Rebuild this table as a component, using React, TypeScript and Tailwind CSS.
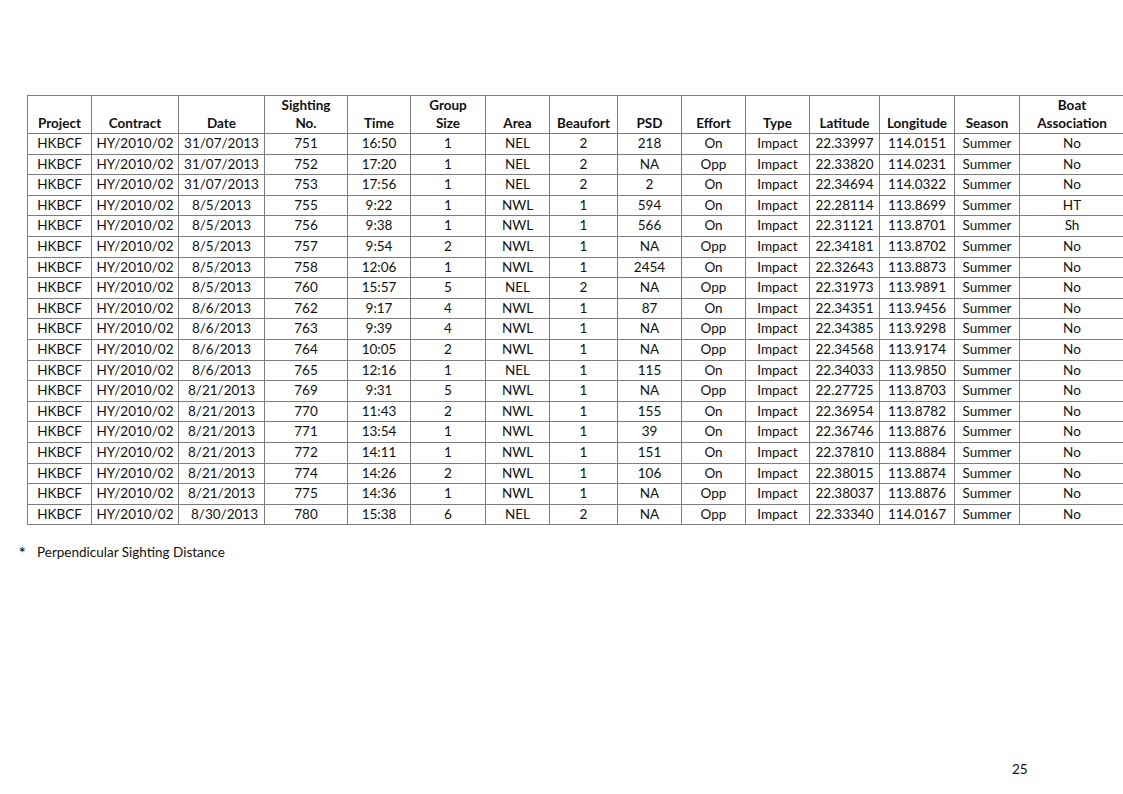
import React from "react";

const widths = [64, 87, 86, 83, 63, 75, 64, 68, 64, 64, 64, 70, 75, 65, 105];
const total = widths.reduce((a, b) => a + b, 0);

const rows: string[][] = [
  ["31/07/2013", "751", "16:50", "1", "NEL", "2", "218", "On", "22.33997", "114.0151", "No"],
  ["31/07/2013", "752", "17:20", "1", "NEL", "2", "NA", "Opp", "22.33820", "114.0231", "No"],
  ["31/07/2013", "753", "17:56", "1", "NEL", "2", "2", "On", "22.34694", "114.0322", "No"],
  ["8/5/2013", "755", "9:22", "1", "NWL", "1", "594", "On", "22.28114", "113.8699", "HT"],
  ["8/5/2013", "756", "9:38", "1", "NWL", "1", "566", "On", "22.31121", "113.8701", "Sh"],
  ["8/5/2013", "757", "9:54", "2", "NWL", "1", "NA", "Opp", "22.34181", "113.8702", "No"],
  ["8/5/2013", "758", "12:06", "1", "NWL", "1", "2454", "On", "22.32643", "113.8873", "No"],
  ["8/5/2013", "760", "15:57", "5", "NEL", "2", "NA", "Opp", "22.31973", "113.9891", "No"],
  ["8/6/2013", "762", "9:17", "4", "NWL", "1", "87", "On", "22.34351", "113.9456", "No"],
  ["8/6/2013", "763", "9:39", "4", "NWL", "1", "NA", "Opp", "22.34385", "113.9298", "No"],
  ["8/6/2013", "764", "10:05", "2", "NWL", "1", "NA", "Opp", "22.34568", "113.9174", "No"],
  ["8/6/2013", "765", "12:16", "1", "NEL", "1", "115", "On", "22.34033", "113.9850", "No"],
  ["8/21/2013", "769", "9:31", "5", "NWL", "1", "NA", "Opp", "22.27725", "113.8703", "No"],
  ["8/21/2013", "770", "11:43", "2", "NWL", "1", "155", "On", "22.36954", "113.8782", "No"],
  ["8/21/2013", "771", "13:54", "1", "NWL", "1", "39", "On", "22.36746", "113.8876", "No"],
  ["8/21/2013", "772", "14:11", "1", "NWL", "1", "151", "On", "22.37810", "113.8884", "No"],
  ["8/21/2013", "774", "14:26", "2", "NWL", "1", "106", "On", "22.38015", "113.8874", "No"],
  ["8/21/2013", "775", "14:36", "1", "NWL", "1", "NA", "Opp", "22.38037", "113.8876", "No"],
  ["8/30/2013", "780", "15:38", "6", "NEL", "2", "NA", "Opp", "22.33340", "114.0167", "No"],
];

const headers: [string, string][] = [
  ["", "Project"],
  ["", "Contract"],
  ["", "Date"],
  ["Sighting", "No."],
  ["", "Time"],
  ["Group", "Size"],
  ["", "Area"],
  ["", "Beaufort"],
  ["", "PSD"],
  ["", "Effort"],
  ["", "Type"],
  ["", "Latitude"],
  ["", "Longitude"],
  ["", "Season"],
  ["Boat", "Association"],
];

export default function App() {
  return (
    <div
      className="relative w-[1123px] h-[794px] overflow-hidden bg-white text-[#111]"
      style={{ fontFamily: "Lato, 'Open Sans', sans-serif" }}
    >
      <div className="pt-[95px] pl-[27px]">
        <table className="border-collapse table-fixed text-[13.5px] leading-none" style={{ width: total }}>
          <colgroup>
            {widths.map((w, i) => (
              <col key={i} style={{ width: w }} />
            ))}
          </colgroup>
          <thead>
            <tr className="h-[38px]">
              {headers.map(([a, b], i) => (
                <th
                  key={i}
                  className="border border-[#7d7d7d] align-bottom text-center font-bold px-0 pb-[1px] whitespace-nowrap"
                >
                  <div className="leading-[18px]">{a || "\u00a0"}</div>
                  <div className="leading-[18px]">{b}</div>
                </th>
              ))}
            </tr>
          </thead>
          <tbody>
            {rows.map((r, ri) => {
              const cells = [
                "HKBCF",
                "HY/2010/02",
                r[0],
                r[1],
                r[2],
                r[3],
                r[4],
                r[5],
                r[6],
                r[7],
                "Impact",
                r[8],
                r[9],
                "Summer",
                r[10],
              ];
              return (
                <tr key={ri} className="h-[20.6px]">
                  {cells.map((c, ci) => (
                    <td
                      key={ci}
                      className={
                        "border border-[#7d7d7d] text-center p-0 whitespace-nowrap align-middle " +
                        (ci === 2 && ri === rows.length - 1 ? "pl-[6px]" : "")
                      }
                    >
                      {c}
                    </td>
                  ))}
                </tr>
              );
            })}
          </tbody>
        </table>
      </div>
      <div className="flex items-center mt-[16px] pl-[19px] text-[13.5px]">
        <span className="font-bold w-[18px] text-[15px]">*</span>
        <span>Perpendicular Sighting Distance</span>
      </div>
      <div className="absolute left-[1012px] top-[759px] text-[13.5px]">25</div>
    </div>
  );
}
